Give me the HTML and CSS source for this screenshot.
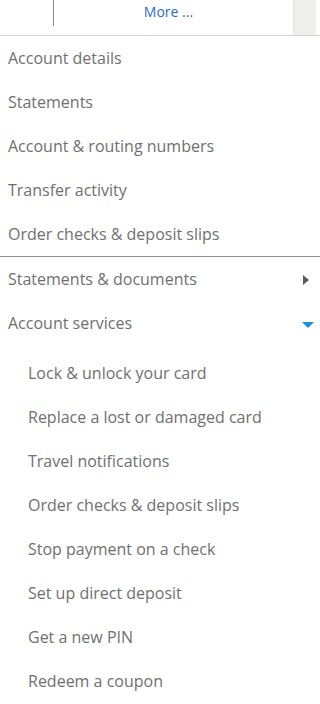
FILE: index.html
```html
<!DOCTYPE html>
<html>
<head>
<meta charset="utf-8">
<link rel="stylesheet" href="styles.css">
</head>
<body>
<div class="header">
  <div class="tab-left"></div>
  <div class="tab-more">More ...</div>
  <div class="scroll"></div>
</div>
<ul class="menu">
  <li class="item">Account details</li>
  <li class="item">Statements</li>
  <li class="item">Account &amp; routing numbers</li>
  <li class="item">Transfer activity</li>
  <li class="item">Order checks &amp; deposit slips</li>
</ul>
<ul class="menu group">
  <li class="item expander">Statements &amp; documents <span class="tri-right"></span></li>
  <li class="item expander">Account services <span class="tri-down"></span></li>
</ul>
<ul class="menu sub">
  <li class="item">Lock &amp; unlock your card</li>
  <li class="item">Replace a lost or damaged card</li>
  <li class="item">Travel notifications</li>
  <li class="item">Order checks &amp; deposit slips</li>
  <li class="item">Stop payment on a check</li>
  <li class="item">Set up direct deposit</li>
  <li class="item">Get a new PIN</li>
  <li class="item">Redeem a coupon</li>
</ul>
</body>
</html>
```
FILE: styles.css
```css
html, body {
  margin: 0;
  padding: 0;
  background: #fff;
  font-family: "Open Sans", "Noto Sans", sans-serif;
  overflow: hidden;
}
.header {
  display: flex;
  height: 35px;
  border-bottom: 1px solid #d4d4d4;
}
.tab-left {
  width: 53px;
  height: 26px;
  border-right: 1px solid #8a8a8a;
}
.tab-more {
  flex: 1;
  text-align: center;
  color: #2e6cc4;
  font-size: 14px;
  line-height: 24px;
  padding-right: 10px;
}
.scroll {
  width: 22px;
  margin-right: 4px;
  background: #efeeec;
  border-left: 1px solid #e2e2e0;
}
.menu {
  list-style: none;
  margin: 0;
  padding: 0;
}
.item {
  height: 44px;
  box-sizing: border-box;
  padding-top: 1px;
  line-height: 43px;
  font-size: 16px;
  color: #707070;
  padding-left: 8px;
  white-space: nowrap;
}
.group {
  border-top: 1px solid #8f8f8f;
}
.expander {
  display: flex;
  align-items: center;
  justify-content: space-between;
  padding-right: 6px;
}
.tri-right {
  width: 0;
  height: 0;
  border-top: 5px solid transparent;
  border-bottom: 5px solid transparent;
  border-left: 6px solid #5a5a5a;
  margin-right: 5px;
}
.tri-down {
  width: 0;
  height: 0;
  border-left: 6px solid transparent;
  border-right: 6px solid transparent;
  border-top: 6px solid #1e8fe0;
  margin-top: 2px;
}
.sub {
  padding-top: 6px;
}
.sub .item {
  padding-left: 28px;
}
```
